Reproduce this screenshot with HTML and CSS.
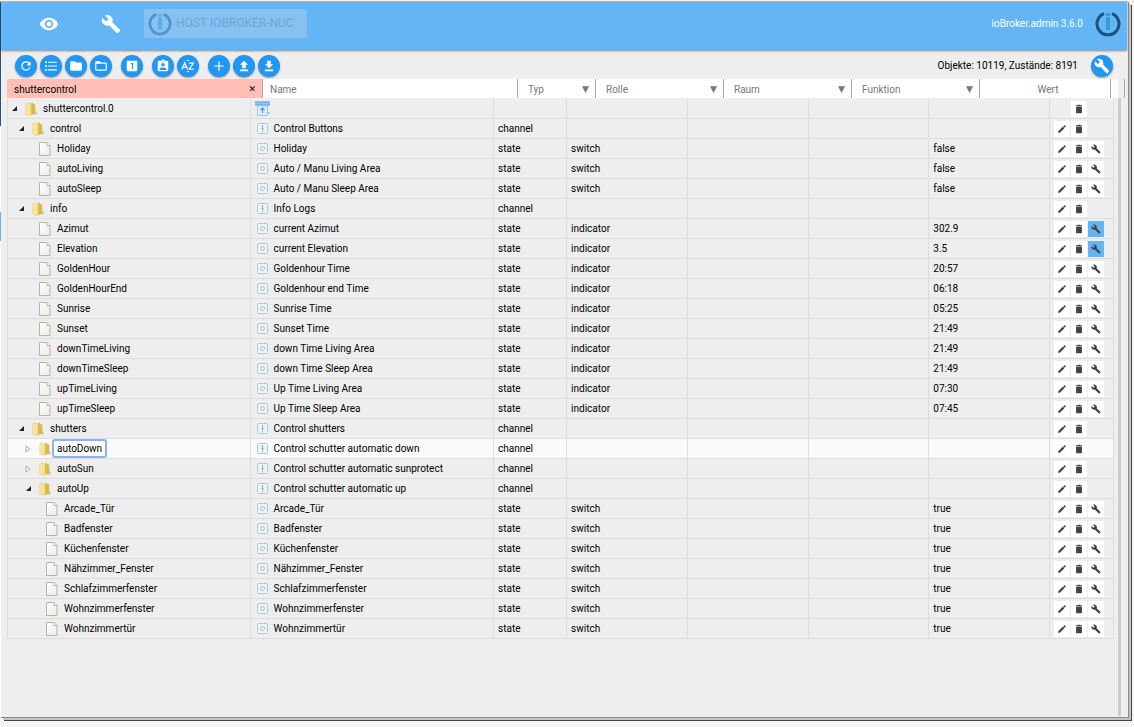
FILE: index.html
```html
<!DOCTYPE html>
<html lang="de">
<head>
<meta charset="utf-8">
<title>ioBroker.admin</title>
<link rel="stylesheet" href="styles.css">
</head>
<body>
<svg class="defs" aria-hidden="true">
  <defs>
    <linearGradient id="gold" x1="0" x2="1"><stop offset="0" stop-color="#f0dd80"/><stop offset=".5" stop-color="#e6cf62"/><stop offset="1" stop-color="#d2b040"/></linearGradient>
    <linearGradient id="paper" x1="0" y1="0" x2="1" y2="1"><stop offset="0" stop-color="#fff"/><stop offset="1" stop-color="#e9ebe4"/></linearGradient>
  </defs>
  <symbol id="eye" viewBox="0 0 24 24"><path d="M12 4.500C7 4.500 2.730 7.610 1 12c1.730 4.390 6 7.500 11 7.500s9.270-3.110 11-7.500c-1.730-4.390-6-7.500-11-7.500zM12 17c-2.760 0-5-2.240-5-5s2.240-5 5-5 5 2.240 5 5-2.240 5-5 5zm0-8c-1.660 0-3 1.340-3 3s1.340 3 3 3 3-1.340 3-3-1.340-3-3-3z"/></symbol>
  <symbol id="wrench" viewBox="0 0 24 24"><path d="M22.700 19l-9.100-9.100c.9-2.300.4-5-1.500-6.900-2-2-5-2.400-7.400-1.300L9 6 6 9 1.600 4.700C.4 7.100.9 10.100 2.900 12.100c1.900 1.900 4.600 2.400 6.900 1.500l9.100 9.100c.4.4 1 .4 1.400 0l2.300-2.300c.5-.4.5-1.100.1-1.400z"/></symbol>
  <symbol id="refresh" viewBox="0 0 24 24"><path d="M17.650 6.350C16.200 4.900 14.210 4 12 4c-4.420 0-7.990 3.580-7.990 8s3.570 8 7.990 8c3.730 0 6.840-2.550 7.730-6h-2.080c-.82 2.330-3.040 4-5.650 4-3.310 0-6-2.690-6-6s2.690-6 6-6c1.660 0 3.140.69 4.220 1.780L13 11h7V4l-2.350 2.350z"/></symbol>
  <symbol id="list" viewBox="0 0 24 24"><path d="M2 4h3v3H2zM2 10.500h3v3H2zM2 17h3v3H2zM7 4.500h15v2H7zM7 11h15v2H7zM7 17.500h15v2H7z"/></symbol>
  <symbol id="dir" viewBox="0 0 24 24"><path d="M10 4H4c-1.100 0-2 .9-2 2v12c0 1.100.9 2 2 2h16c1.100 0 2-.9 2-2V8c0-1.100-.9-2-2-2h-8l-2-2z"/></symbol>
  <symbol id="diropen" viewBox="0 0 24 24"><path d="M20 6h-8l-2-2H4c-1.100 0-2 .9-2 2v12c0 1.100.9 2 2 2h16c1.100 0 2-.9 2-2V8c0-1.100-.9-2-2-2zm0 12H4V8h16v10z"/></symbol>
  <symbol id="one" viewBox="0 0 24 24"><path d="M19 3H5c-1.100 0-2 .9-2 2v14c0 1.100.9 2 2 2h14c1.100 0 2-.9 2-2V5c0-1.100-.9-2-2-2zm-5 14h-2V9h-2V7h4v10z"/></symbol>
  <symbol id="badge" viewBox="0 0 24 24"><path d="M19 3h-4.180C14.400 1.840 13.300 1 12 1s-2.400.84-2.820 2H5c-1.100 0-2 .9-2 2v14c0 1.100.9 2 2 2h14c1.100 0 2-.9 2-2V5c0-1.100-.9-2-2-2zm-7 0c.55 0 1 .45 1 1s-.45 1-1 1-1-.45-1-1 .45-1 1-1zm0 4c1.660 0 3 1.340 3 3s-1.340 3-3 3-3-1.340-3-3 1.340-3 3-3zm6 12H6v-1.400c0-2 4-3.100 6-3.100s6 1.100 6 3.100V19z"/></symbol>
  <symbol id="sort" viewBox="0 0 24 24"><path d="M9.500 3.500h5L12 1zM9.500 20.500h5L12 23z"/><path class="stroke" d="M1.500 18L6.500 6.500 11.500 18M3.300 14h6.400M14 7h7.500L14 17.500h8"/></symbol>
  <symbol id="plus" viewBox="0 0 24 24"><path d="M20 13h-7v7h-2v-7H4v-2h7V4h2v7h7z"/></symbol>
  <symbol id="upload" viewBox="0 0 24 24"><path d="M9 16h6v-6h4l-7-7-7 7h4zM5 18h14v3H5z"/></symbol>
  <symbol id="download" viewBox="0 0 24 24"><path d="M19 9h-4V3H9v6H5l7 7 7-7zM5 18v3h14v-3z"/></symbol>
  <symbol id="pen" viewBox="0 0 24 24"><path d="M3 17.250V21h3.750L17.810 9.940l-3.750-3.750L3 17.250zM20.710 7.040c.39-.39.39-1.020 0-1.410l-2.340-2.340c-.39-.39-1.020-.39-1.410 0l-1.830 1.830 3.750 3.750 1.830-1.830z"/></symbol>
  <symbol id="bin" viewBox="0 0 24 24"><path d="M5 6v13.500c0 1.300 1 2.500 2.500 2.500h9c1.500 0 2.500-1.200 2.500-2.500V6zM5 3h4V1.500h6V3h4v2H5z"/></symbol>
  <symbol id="logo" viewBox="0 0 26 26"><path class="ring" d="M9 2.600a11 11 0 1 0 8 0"/><path class="bar" d="M11 2h4v3h-4zM11 6h4v13h-4z"/></symbol>
  <symbol id="folder" viewBox="0 0 12 14"><path d="M.8 1.800L4 .8v12.400L.8 12z" fill="#f6eaaa" stroke="#dcc66a" stroke-width=".5"/><path d="M4 1.500L8 .5v12l-4 1.300z" fill="url(#gold)"/><path d="M8 2l2.300.5v9.300L8 12.500z" fill="#d8b94a"/><path d="M4.500 1.800v11" stroke="#fbf3c0" stroke-width=".8"/><path d="M10 9.500h1.500v3H10z" fill="#a9c9b8"/></symbol>
  <symbol id="file" viewBox="0 0 12 14"><path d="M.5.500H8l3 3v10H.5z" fill="url(#paper)" stroke="#b4b6ac"/><path d="M8 .5v3h3" fill="#f6f6f2" stroke="#b4b6ac"/></symbol>
  <symbol id="open" viewBox="0 0 6 6"><path d="M6 0v5H1z" fill="#222"/></symbol>
  <symbol id="shut" viewBox="0 0 6 8"><path d="M1 1l4 3-4 3z" fill="#fff" stroke="#aaa"/></symbol>
  <symbol id="channel" viewBox="0 0 11 11"><rect x=".5" y=".5" width="10" height="10" rx="1" fill="#eef3f5" stroke="#b3c8cf"/><path d="M5.500 2v3M5.500 8v1.200" stroke="#8fb0bb"/><path d="M4 5.200h3L5.500 7.500z" fill="#7ea5b2"/></symbol>
  <symbol id="state" viewBox="0 0 11 11"><rect x=".5" y=".5" width="10" height="10" rx="1" fill="#eef3f5" stroke="#b3c8cf"/><circle cx="5.500" cy="5.500" r="2" fill="none" stroke="#a3bcc5"/></symbol>
  <symbol id="shutter" viewBox="0 0 15 15"><path d="M0 0h15v5H0z" fill="#8fc2f0"/><path d="M0 1.500h15M0 3.500h15" stroke="#6ba9e2" stroke-width=".7"/><path d="M2.500 5v9.500h10V5z" fill="#dcecfa" stroke="#9dc8ef"/><path d="M7.500 12V7.500M5.500 9l2-2 2 2" fill="none" stroke="#4f9be0" stroke-width="1.200"/><path d="M13 11h2v2h-2z" fill="#a9cff2"/></symbol>
</svg>
<div class="window">
  <header class="appbar">
    <button class="nav" aria-label="Sichtbarkeit"><svg><use href="#eye"/></svg></button>
    <button class="nav" aria-label="Einstellungen"><svg><use href="#wrench"/></svg></button>
    <button class="host" disabled><svg><use href="#logo"/></svg>HOST IOBROKER-NUC</button>
    <span class="version">ioBroker.admin 3.6.0</span>
    <svg class="logo"><use href="#logo"/></svg>
  </header>
  <div class="toolbar">
    <div class="group">
      <button class="round" aria-label="Aktualisieren"><svg><use href="#refresh"/></svg></button>
      <button class="round" aria-label="Liste"><svg><use href="#list"/></svg></button>
      <button class="round" aria-label="Alle zuklappen"><svg><use href="#dir"/></svg></button>
      <button class="round" aria-label="Alle aufklappen"><svg><use href="#diropen"/></svg></button>
    </div>
    <div class="group"><button class="round" aria-label="Eine Ebene"><svg><use href="#one"/></svg></button></div>
    <div class="group">
      <button class="round" aria-label="Expertenmodus"><svg><use href="#badge"/></svg></button>
      <button class="round" aria-label="Sortieren"><svg><use href="#sort"/></svg></button>
    </div>
    <div class="group">
      <button class="round" aria-label="Hinzufügen"><svg><use href="#plus"/></svg></button>
      <button class="round" aria-label="Hochladen"><svg><use href="#upload"/></svg></button>
      <button class="round" aria-label="Herunterladen"><svg><use href="#download"/></svg></button>
    </div>
    <span class="count">Objekte: 10119, Zustände: 8191</span>
    <button class="round config" aria-label="Konfiguration"><svg><use href="#wrench"/></svg></button>
  </div>
  <div class="filters">
    <div class="filter active"><input aria-label="ID" value="shuttercontrol"><button class="clear" aria-label="Filter löschen">✕</button></div>
    <div class="filter"><input aria-label="Name" placeholder="Name"></div>
    <label class="filter pick"><select aria-label="Typ"><option>Typ</option></select><span>▼</span></label>
    <label class="filter pick"><select aria-label="Rolle"><option>Rolle</option></select><span>▼</span></label>
    <label class="filter pick"><select aria-label="Raum"><option>Raum</option></select><span>▼</span></label>
    <label class="filter pick"><select aria-label="Funktion"><option>Funktion</option></select><span>▼</span></label>
    <div class="filter value">Wert</div>
    <div class="filter"></div>
  </div>
  <main class="content">
    <div class="pane">
    <table class="objects">
      <colgroup><col class="c-id"><col class="c-name"><col class="c-type"><col><col><col><col><col class="c-act"></colgroup>
      <tbody>
      <tr><td><div class="node l0"><svg class="arr"><use href="#open"/></svg><svg class="ico"><use href="#folder"/></svg><span>shuttercontrol.0</span></div></td><td><div class="name device"><svg><use href="#shutter"/></svg></div></td><td></td><td></td><td></td><td></td><td></td><td><div class="acts"><i></i><button aria-label="Löschen"><svg><use href="#bin"/></svg></button></div></td></tr>
      <tr><td><div class="node l1"><svg class="arr"><use href="#open"/></svg><svg class="ico"><use href="#folder"/></svg><span>control</span></div></td><td><div class="name"><svg><use href="#channel"/></svg>Control Buttons</div></td><td>channel</td><td></td><td></td><td></td><td></td><td><div class="acts"><button aria-label="Bearbeiten"><svg><use href="#pen"/></svg></button><button aria-label="Löschen"><svg><use href="#bin"/></svg></button></div></td></tr>
      <tr><td><div class="node l2 leaf"><svg class="ico"><use href="#file"/></svg><span>Holiday</span></div></td><td><div class="name"><svg><use href="#state"/></svg>Holiday</div></td><td>state</td><td>switch</td><td></td><td></td><td>false</td><td><div class="acts"><button aria-label="Bearbeiten"><svg><use href="#pen"/></svg></button><button aria-label="Löschen"><svg><use href="#bin"/></svg></button><button aria-label="Einstellungen"><svg><use href="#wrench"/></svg></button></div></td></tr>
      <tr><td><div class="node l2 leaf"><svg class="ico"><use href="#file"/></svg><span>autoLiving</span></div></td><td><div class="name"><svg><use href="#state"/></svg>Auto / Manu Living Area</div></td><td>state</td><td>switch</td><td></td><td></td><td>false</td><td><div class="acts"><button aria-label="Bearbeiten"><svg><use href="#pen"/></svg></button><button aria-label="Löschen"><svg><use href="#bin"/></svg></button><button aria-label="Einstellungen"><svg><use href="#wrench"/></svg></button></div></td></tr>
      <tr><td><div class="node l2 leaf"><svg class="ico"><use href="#file"/></svg><span>autoSleep</span></div></td><td><div class="name"><svg><use href="#state"/></svg>Auto / Manu Sleep Area</div></td><td>state</td><td>switch</td><td></td><td></td><td>false</td><td><div class="acts"><button aria-label="Bearbeiten"><svg><use href="#pen"/></svg></button><button aria-label="Löschen"><svg><use href="#bin"/></svg></button><button aria-label="Einstellungen"><svg><use href="#wrench"/></svg></button></div></td></tr>
      <tr><td><div class="node l1"><svg class="arr"><use href="#open"/></svg><svg class="ico"><use href="#folder"/></svg><span>info</span></div></td><td><div class="name"><svg><use href="#channel"/></svg>Info Logs</div></td><td>channel</td><td></td><td></td><td></td><td></td><td><div class="acts"><button aria-label="Bearbeiten"><svg><use href="#pen"/></svg></button><button aria-label="Löschen"><svg><use href="#bin"/></svg></button></div></td></tr>
      <tr><td><div class="node l2 leaf"><svg class="ico"><use href="#file"/></svg><span>Azimut</span></div></td><td><div class="name"><svg><use href="#state"/></svg>current Azimut</div></td><td>state</td><td>indicator</td><td></td><td></td><td>302.9</td><td><div class="acts"><button aria-label="Bearbeiten"><svg><use href="#pen"/></svg></button><button aria-label="Löschen"><svg><use href="#bin"/></svg></button><button class="on" aria-label="Einstellungen"><svg><use href="#wrench"/></svg></button></div></td></tr>
      <tr><td><div class="node l2 leaf"><svg class="ico"><use href="#file"/></svg><span>Elevation</span></div></td><td><div class="name"><svg><use href="#state"/></svg>current Elevation</div></td><td>state</td><td>indicator</td><td></td><td></td><td>3.5</td><td><div class="acts"><button aria-label="Bearbeiten"><svg><use href="#pen"/></svg></button><button aria-label="Löschen"><svg><use href="#bin"/></svg></button><button class="on" aria-label="Einstellungen"><svg><use href="#wrench"/></svg></button></div></td></tr>
      <tr><td><div class="node l2 leaf"><svg class="ico"><use href="#file"/></svg><span>GoldenHour</span></div></td><td><div class="name"><svg><use href="#state"/></svg>Goldenhour Time</div></td><td>state</td><td>indicator</td><td></td><td></td><td>20:57</td><td><div class="acts"><button aria-label="Bearbeiten"><svg><use href="#pen"/></svg></button><button aria-label="Löschen"><svg><use href="#bin"/></svg></button><button aria-label="Einstellungen"><svg><use href="#wrench"/></svg></button></div></td></tr>
      <tr><td><div class="node l2 leaf"><svg class="ico"><use href="#file"/></svg><span>GoldenHourEnd</span></div></td><td><div class="name"><svg><use href="#state"/></svg>Goldenhour end Time</div></td><td>state</td><td>indicator</td><td></td><td></td><td>06:18</td><td><div class="acts"><button aria-label="Bearbeiten"><svg><use href="#pen"/></svg></button><button aria-label="Löschen"><svg><use href="#bin"/></svg></button><button aria-label="Einstellungen"><svg><use href="#wrench"/></svg></button></div></td></tr>
      <tr><td><div class="node l2 leaf"><svg class="ico"><use href="#file"/></svg><span>Sunrise</span></div></td><td><div class="name"><svg><use href="#state"/></svg>Sunrise Time</div></td><td>state</td><td>indicator</td><td></td><td></td><td>05:25</td><td><div class="acts"><button aria-label="Bearbeiten"><svg><use href="#pen"/></svg></button><button aria-label="Löschen"><svg><use href="#bin"/></svg></button><button aria-label="Einstellungen"><svg><use href="#wrench"/></svg></button></div></td></tr>
      <tr><td><div class="node l2 leaf"><svg class="ico"><use href="#file"/></svg><span>Sunset</span></div></td><td><div class="name"><svg><use href="#state"/></svg>Sunset Time</div></td><td>state</td><td>indicator</td><td></td><td></td><td>21:49</td><td><div class="acts"><button aria-label="Bearbeiten"><svg><use href="#pen"/></svg></button><button aria-label="Löschen"><svg><use href="#bin"/></svg></button><button aria-label="Einstellungen"><svg><use href="#wrench"/></svg></button></div></td></tr>
      <tr><td><div class="node l2 leaf"><svg class="ico"><use href="#file"/></svg><span>downTimeLiving</span></div></td><td><div class="name"><svg><use href="#state"/></svg>down Time Living Area</div></td><td>state</td><td>indicator</td><td></td><td></td><td>21:49</td><td><div class="acts"><button aria-label="Bearbeiten"><svg><use href="#pen"/></svg></button><button aria-label="Löschen"><svg><use href="#bin"/></svg></button><button aria-label="Einstellungen"><svg><use href="#wrench"/></svg></button></div></td></tr>
      <tr><td><div class="node l2 leaf"><svg class="ico"><use href="#file"/></svg><span>downTimeSleep</span></div></td><td><div class="name"><svg><use href="#state"/></svg>down Time Sleep Area</div></td><td>state</td><td>indicator</td><td></td><td></td><td>21:49</td><td><div class="acts"><button aria-label="Bearbeiten"><svg><use href="#pen"/></svg></button><button aria-label="Löschen"><svg><use href="#bin"/></svg></button><button aria-label="Einstellungen"><svg><use href="#wrench"/></svg></button></div></td></tr>
      <tr><td><div class="node l2 leaf"><svg class="ico"><use href="#file"/></svg><span>upTimeLiving</span></div></td><td><div class="name"><svg><use href="#state"/></svg>Up Time Living Area</div></td><td>state</td><td>indicator</td><td></td><td></td><td>07:30</td><td><div class="acts"><button aria-label="Bearbeiten"><svg><use href="#pen"/></svg></button><button aria-label="Löschen"><svg><use href="#bin"/></svg></button><button aria-label="Einstellungen"><svg><use href="#wrench"/></svg></button></div></td></tr>
      <tr><td><div class="node l2 leaf"><svg class="ico"><use href="#file"/></svg><span>upTimeSleep</span></div></td><td><div class="name"><svg><use href="#state"/></svg>Up Time Sleep Area</div></td><td>state</td><td>indicator</td><td></td><td></td><td>07:45</td><td><div class="acts"><button aria-label="Bearbeiten"><svg><use href="#pen"/></svg></button><button aria-label="Löschen"><svg><use href="#bin"/></svg></button><button aria-label="Einstellungen"><svg><use href="#wrench"/></svg></button></div></td></tr>
      <tr><td><div class="node l1"><svg class="arr"><use href="#open"/></svg><svg class="ico"><use href="#folder"/></svg><span>shutters</span></div></td><td><div class="name"><svg><use href="#channel"/></svg>Control shutters</div></td><td>channel</td><td></td><td></td><td></td><td></td><td><div class="acts"><button aria-label="Bearbeiten"><svg><use href="#pen"/></svg></button><button aria-label="Löschen"><svg><use href="#bin"/></svg></button></div></td></tr>
      <tr class="current"><td><div class="node l2"><svg class="arr"><use href="#shut"/></svg><svg class="ico"><use href="#folder"/></svg><span>autoDown</span></div></td><td><div class="name"><svg><use href="#channel"/></svg>Control schutter automatic down</div></td><td>channel</td><td></td><td></td><td></td><td></td><td><div class="acts"><button aria-label="Bearbeiten"><svg><use href="#pen"/></svg></button><button aria-label="Löschen"><svg><use href="#bin"/></svg></button></div></td></tr>
      <tr><td><div class="node l2"><svg class="arr"><use href="#shut"/></svg><svg class="ico"><use href="#folder"/></svg><span>autoSun</span></div></td><td><div class="name"><svg><use href="#channel"/></svg>Control schutter automatic sunprotect</div></td><td>channel</td><td></td><td></td><td></td><td></td><td><div class="acts"><button aria-label="Bearbeiten"><svg><use href="#pen"/></svg></button><button aria-label="Löschen"><svg><use href="#bin"/></svg></button></div></td></tr>
      <tr><td><div class="node l2"><svg class="arr"><use href="#open"/></svg><svg class="ico"><use href="#folder"/></svg><span>autoUp</span></div></td><td><div class="name"><svg><use href="#channel"/></svg>Control schutter automatic up</div></td><td>channel</td><td></td><td></td><td></td><td></td><td><div class="acts"><button aria-label="Bearbeiten"><svg><use href="#pen"/></svg></button><button aria-label="Löschen"><svg><use href="#bin"/></svg></button></div></td></tr>
      <tr><td><div class="node l3 leaf"><svg class="ico"><use href="#file"/></svg><span>Arcade_Tür</span></div></td><td><div class="name"><svg><use href="#state"/></svg>Arcade_Tür</div></td><td>state</td><td>switch</td><td></td><td></td><td>true</td><td><div class="acts"><button aria-label="Bearbeiten"><svg><use href="#pen"/></svg></button><button aria-label="Löschen"><svg><use href="#bin"/></svg></button><button aria-label="Einstellungen"><svg><use href="#wrench"/></svg></button></div></td></tr>
      <tr><td><div class="node l3 leaf"><svg class="ico"><use href="#file"/></svg><span>Badfenster</span></div></td><td><div class="name"><svg><use href="#state"/></svg>Badfenster</div></td><td>state</td><td>switch</td><td></td><td></td><td>true</td><td><div class="acts"><button aria-label="Bearbeiten"><svg><use href="#pen"/></svg></button><button aria-label="Löschen"><svg><use href="#bin"/></svg></button><button aria-label="Einstellungen"><svg><use href="#wrench"/></svg></button></div></td></tr>
      <tr><td><div class="node l3 leaf"><svg class="ico"><use href="#file"/></svg><span>Küchenfenster</span></div></td><td><div class="name"><svg><use href="#state"/></svg>Küchenfenster</div></td><td>state</td><td>switch</td><td></td><td></td><td>true</td><td><div class="acts"><button aria-label="Bearbeiten"><svg><use href="#pen"/></svg></button><button aria-label="Löschen"><svg><use href="#bin"/></svg></button><button aria-label="Einstellungen"><svg><use href="#wrench"/></svg></button></div></td></tr>
      <tr><td><div class="node l3 leaf"><svg class="ico"><use href="#file"/></svg><span>Nähzimmer_Fenster</span></div></td><td><div class="name"><svg><use href="#state"/></svg>Nähzimmer_Fenster</div></td><td>state</td><td>switch</td><td></td><td></td><td>true</td><td><div class="acts"><button aria-label="Bearbeiten"><svg><use href="#pen"/></svg></button><button aria-label="Löschen"><svg><use href="#bin"/></svg></button><button aria-label="Einstellungen"><svg><use href="#wrench"/></svg></button></div></td></tr>
      <tr><td><div class="node l3 leaf"><svg class="ico"><use href="#file"/></svg><span>Schlafzimmerfenster</span></div></td><td><div class="name"><svg><use href="#state"/></svg>Schlafzimmerfenster</div></td><td>state</td><td>switch</td><td></td><td></td><td>true</td><td><div class="acts"><button aria-label="Bearbeiten"><svg><use href="#pen"/></svg></button><button aria-label="Löschen"><svg><use href="#bin"/></svg></button><button aria-label="Einstellungen"><svg><use href="#wrench"/></svg></button></div></td></tr>
      <tr><td><div class="node l3 leaf"><svg class="ico"><use href="#file"/></svg><span>Wohnzimmerfenster</span></div></td><td><div class="name"><svg><use href="#state"/></svg>Wohnzimmerfenster</div></td><td>state</td><td>switch</td><td></td><td></td><td>true</td><td><div class="acts"><button aria-label="Bearbeiten"><svg><use href="#pen"/></svg></button><button aria-label="Löschen"><svg><use href="#bin"/></svg></button><button aria-label="Einstellungen"><svg><use href="#wrench"/></svg></button></div></td></tr>
      <tr><td><div class="node l3 leaf"><svg class="ico"><use href="#file"/></svg><span>Wohnzimmertür</span></div></td><td><div class="name"><svg><use href="#state"/></svg>Wohnzimmertür</div></td><td>state</td><td>switch</td><td></td><td></td><td>true</td><td><div class="acts"><button aria-label="Bearbeiten"><svg><use href="#pen"/></svg></button><button aria-label="Löschen"><svg><use href="#bin"/></svg></button><button aria-label="Einstellungen"><svg><use href="#wrench"/></svg></button></div></td></tr>
      </tbody>
    </table>
    </div>
    <div class="scrollbar"></div>
  </main>
</div>
</body>
</html>
```
FILE: styles.css
```css
* { box-sizing: border-box; }
body { margin: 0; background: #f5f5f5; font: 10px/15px Roboto, "Open Sans", sans-serif; color: #000; }
button, input, select { margin: 0; padding: 0; border: 0; background: none; font: inherit; color: inherit; outline: 0; }
svg { display: block; flex: none; fill: currentColor; }
.defs { position: absolute; width: 0; height: 0; }

.window {
  display: flex; flex-direction: column;
  min-height: calc(100vh - 11px); margin: 1px 6px 10px 0; padding-left: 1px;
  border-top: 1px solid #b9b9b9;
  background: linear-gradient(#2f5378 124px, #fff 124px, #fff 210px, #64b5f6 210px, #64b5f6 239px, #fff 239px) left / 1px 100% no-repeat, #eee;
  box-shadow: 1px 1px #888, 3px 3px #c4c4c4, 4px 4px #444;
}

.appbar { display: flex; align-items: center; height: 48px; padding: 0 6px 5px 38px; margin-right: 1px; background: #64b5f6; color: #fff; box-shadow: 0 1px 2px rgba(0,0,0,.45); }
.nav { width: 20px; margin-right: 42px; }
.nav svg { width: 20px; height: 20px; }
.nav + .nav { margin-right: 23px; }
.host { --ring: #4a93d0; --bar: #5baee0; display: flex; align-items: center; gap: 4px; height: 29px; padding: 0 13px 0 4px; border-radius: 2px; background: #88c0f0; color: #65a9e2; font-size: 12px; }
.host svg { width: 24px; height: 24px; }
.ring { fill: none; stroke: var(--ring); stroke-width: 3; }
.bar { fill: var(--bar); }
.version { margin-left: auto; margin-right: 12px; }
.logo { --ring: #1c527f; --bar: #3a9bc9; width: 26px; height: 26px; }

.toolbar { display: flex; align-items: center; gap: 9px; height: 29px; padding: 2px 15px 0 14px; }
.group { display: flex; gap: 3px; }
.round { display: flex; align-items: center; justify-content: center; width: 22px; height: 22px; border-radius: 50%; background: #2196f3; color: #fff; box-shadow: 0 1px 2px rgba(0,0,0,.35); }
.round svg { width: 14px; height: 14px; }
.stroke { fill: none; stroke: currentColor; stroke-width: 2; }
.count { margin-left: auto; margin-right: 4px; }
.config svg { width: 16px; height: 16px; }

.filters { display: grid; grid-template-columns: 256fr 255fr 78fr 128fr 128fr 128fr 131fr 7px; margin: 0 10px 0 6px; height: 19px; background: #fff; color: #777; }
.filter { display: flex; align-items: center; min-width: 0; border-right: 1px solid #aaa; padding: 1px 6px 0 7px; }
.filter input, .filter select { flex: 1; min-width: 0; width: 100%; height: 15px; appearance: none; }
.filter input::placeholder { color: #777; opacity: 1; }
.active { background: #ffbfb7; color: #000; }
.clear { font: 9px/12px "DejaVu Sans", sans-serif; }
.pick { padding-left: 10px; }
.pick span { font: 9px/12px "DejaVu Sans", sans-serif; pointer-events: none; }
.value { justify-content: center; padding-left: 12px; }

.content { display: flex; flex: 1; padding: 0 7px 1px 6px; }
.pane { flex: 1; margin-right: 4px; padding-top: 1px; }
.scrollbar { width: 3px; background: #ccc; }
.objects { width: 100%; table-layout: fixed; border-collapse: separate; border-spacing: 0; }
.c-id, .c-name { width: 22%; }
.c-type { width: 73px; }
.c-act { width: 64px; }
.objects td { height: 20px; padding: 0 4px; border: solid #ddd; border-width: 0 1px 1px 0; white-space: nowrap; overflow: hidden; }
.objects td:first-child { border-left-width: 1px; padding-left: 3px; }
.current { background: #fafafa; }
.node, .name, .acts { display: flex; align-items: center; height: 19px; }
.node span { margin-left: 2px; padding: 0 3px; border: 1px solid transparent; border-radius: 2px; }
.current .node span { border-color: #8ab4f8; background: #fff; box-shadow: 0 0 0 1px #8ab4f8; }
.arr { width: 6px; height: 8px; margin-right: 8px; }
.ico { width: 12px; height: 14px; }
.leaf .ico { margin-left: 14px; }
.l1 { padding-left: 7px; }
.l2 { padding-left: 14px; }
.l3 { padding-left: 21px; }
.name { gap: 6px; padding-left: 2px; }
.name svg { width: 11px; height: 11px; }
.device { padding-left: 0; }
.device svg { width: 15px; height: 15px; }
.acts { gap: 1px; }
.acts button { display: flex; align-items: center; justify-content: center; width: 16px; height: 16px; background: #fff; color: #424242; }
.acts i { width: 16px; }
.acts svg { width: 10px; height: 10px; }
.acts .on { background: #64b5f6; }
```
